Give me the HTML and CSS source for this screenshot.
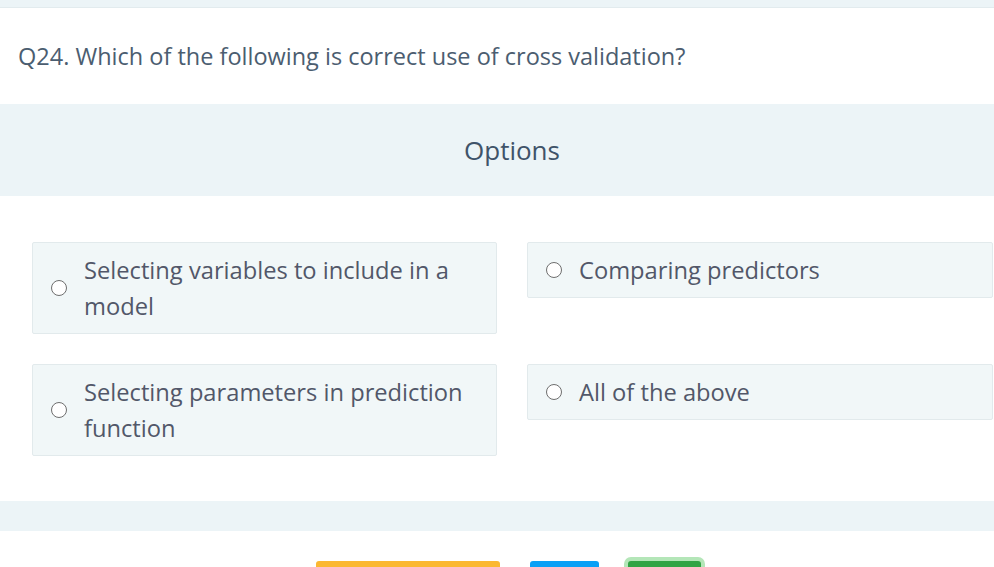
FILE: index.html
```html
<!DOCTYPE html>
<html>
<head>
<meta charset="utf-8">
<link rel="stylesheet" href="styles.css">
</head>
<body>
<div class="topbar"></div>
<div class="question">Q24. Which of the following is correct use of cross validation?</div>
<div class="options-head">Options</div>
<div class="grid">
  <label class="option"><span class="radio"></span><span class="text">Selecting variables to include in a model</span></label>
  <label class="option"><span class="radio"></span><span class="text">Comparing predictors</span></label>
  <label class="option"><span class="radio"></span><span class="text">Selecting parameters in prediction function</span></label>
  <label class="option"><span class="radio"></span><span class="text">All of the above</span></label>
</div>
<div class="footer-band"></div>
<div class="buttons">
  <span class="btn btn-yellow"></span>
  <span class="btn btn-blue"></span>
  <span class="btn btn-green"></span>
</div>
</body>
</html>
```
FILE: styles.css
```css
html, body {
  margin: 0;
  padding: 0;
  background: #ffffff;
  overflow: hidden;
}
body {
  font-family: "Open Sans", "Noto Sans", sans-serif;
  width: 994px;
  height: 567px;
}
.topbar {
  height: 7px;
  background: #ecf4f7;
  border-bottom: 1px solid #e2ebee;
}
.question {
  padding: 33px 18px 0;
  height: 63px;
  font-size: 23.5px;
  line-height: 30px;
  color: #4b5d70;
}
.options-head {
  height: 92px;
  background: #ecf4f7;
  display: flex;
  align-items: center;
  justify-content: center;
  padding-left: 30px;
  font-size: 26px;
  color: #3f5369;
}
.grid {
  display: grid;
  grid-template-columns: 465px 466px;
  column-gap: 30px;
  row-gap: 30px;
  padding: 46px 0 0 32px;
  align-items: start;
}
.option {
  display: flex;
  align-items: center;
  background: #f1f7f8;
  border: 1px solid #e2eaec;
  border-radius: 2px;
  padding: 9px 18px 9px 18px;
}
.radio {
  flex: none;
  width: 14px;
  height: 14px;
  border: 1.6px solid #6e6e6e;
  border-radius: 50%;
  background: #ffffff;
  margin-right: 17px;
}
.text {
  font-size: 23.7px;
  line-height: 36px;
  color: #525769;
}
.footer-band {
  margin-top: 45px;
  height: 30px;
  background: #ecf4f7;
}
.buttons {
  display: flex;
  padding: 30px 0 0 316px;
  gap: 30px;
}
.btn {
  display: block;
  height: 30px;
  border-radius: 3px;
}
.btn-yellow { width: 184px; background: #fbb832; }
.btn-blue { width: 69px; background: #0aa0f6; }
.btn-green {
  width: 73px;
  margin-left: -1px;
  background: #31a444;
  box-shadow: 0 0 0 4px #b4e6b8;
}
```
